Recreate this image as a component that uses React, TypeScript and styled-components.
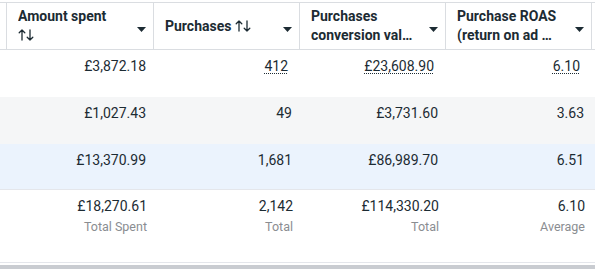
import React from "react";
import styled, { createGlobalStyle } from "styled-components";

const GlobalStyle = createGlobalStyle`
    html, body {
        margin: 0;
        padding: 0;
        background: #fff;
    }
    body {
        font-family: Roboto, "Liberation Sans", Arial, sans-serif;
        color: #1c2b33;
        -webkit-font-smoothing: antialiased;
    }
`;

/* 列幅は全行で共通 (先頭の列は画面外にはみ出している) */
const COLS = "147px 147px 146px 146px 146px 1fr";

const Page = styled.div`
    width: 595px;
    height: 270px;
    overflow: hidden;
    display: flex;
    flex-direction: column;
    padding-top: 2px;
    box-sizing: border-box;
`;

const Table = styled.div`
    margin-left: -141px;
    width: 736px;
    display: flex;
    flex-direction: column;
`;

const HeaderRow = styled.div`
    display: grid;
    grid-template-columns: ${COLS};
    height: 48px;
    border-top: 1px solid #dadde1;
    border-bottom: 1px solid #dadde1;
    box-sizing: border-box;
`;

const HeaderCell = styled.div`
    display: flex;
    align-items: center;
    gap: 8px;
    padding: 0 7px 0 11px;
    border-left: 1px solid #dadde1;
    min-width: 0;
`;

const Title = styled.div`
    flex: 1 1 auto;
    min-width: 0;
    font-size: 14px;
    font-weight: 700;
    line-height: 19px;
    color: #1c2b33;
`;

// 2行目は列幅に収まらない分を「…」で切る
const TitleLine = styled.div<{ $clip?: number }>`
    white-space: nowrap;
    overflow: hidden;
    text-overflow: ellipsis;
    max-width: ${(p) => (p.$clip ? `${p.$clip}px` : "none")};

    svg {
        vertical-align: -1px;
    }
`;

const Caret = styled.svg`
    flex: none;
    margin-left: auto;
    margin-top: 6px;
`;

const Row = styled.div<{ $bg: string; $h: number }>`
    display: grid;
    grid-template-columns: ${COLS};
    height: ${(p) => p.$h}px;
    background: ${(p) => p.$bg};
`;

const Cell = styled.div`
    padding: 6px 7px 0 8px;
    text-align: right;
    font-size: 14px;
    line-height: 20px;
    color: #1c2b33;
`;

const Value = styled.span<{ $linked?: boolean }>`
    margin-right: ${(p) => (p.$linked ? "4px" : "0")};
    text-decoration: ${(p) => (p.$linked ? "underline dotted" : "none")};
    text-underline-offset: 2px;
    text-decoration-thickness: 1px;
`;

const FooterRow = styled.div`
    display: grid;
    grid-template-columns: ${COLS};
    height: 74px;
    border-top: 1px solid #e4e6eb;
    border-bottom: 1px solid #e4e6eb;
    box-sizing: border-box;
`;

const FooterCell = styled.div`
    padding: 6px 6px 0 8px;
    text-align: right;
    display: flex;
    flex-direction: column;
`;

const Total = styled.div`
    font-size: 14px;
    line-height: 20px;
    color: #1c2b33;
`;

const SubLabel = styled.div`
    font-size: 12.5px;
    line-height: 21px;
    color: #8a8d91;
`;

const ScrollTrack = styled.div`
    margin-top: 2px;
    height: 4px;
    background: #c9ccd1;
`;

const SortIcon = () => (
    <svg width="16" height="12" viewBox="0 0 16 12" fill="none" stroke="#1c2b33" strokeWidth="1.3" strokeLinecap="round" strokeLinejoin="round">
        <path d="M4 11V1M1.2 3.8L4 1l2.8 2.8" />
        <path d="M12 1v10M9.2 8.2L12 11l2.8-2.8" />
    </svg>
);

const CaretIcon = () => (
    <Caret width="9" height="5" viewBox="0 0 9 5">
        <path d="M0 0h9L4.5 5z" fill="#1c2b33" />
    </Caret>
);

type Col = { lines: React.ReactNode[]; clip?: number };

const columns: Col[] = [
    { lines: ["Amount spent", <SortIcon key="s" />] },
    { lines: [<>Purchases <SortIcon key="s" /></>] },
    { lines: ["Purchases", "conversion value"], clip: 104 },
    { lines: ["Purchase ROAS", "(return on ad spend)"], clip: 98 },
];

type Datum = { v: string; linked?: boolean };

const rows: { bg: string; h: number; cells: Datum[] }[] = [
    {
        bg: "#ffffff",
        h: 47,
        cells: [{ v: "£3,872.18" }, { v: "412", linked: true }, { v: "£23,608.90", linked: true }, { v: "6.10", linked: true }],
    },
    {
        bg: "#f5f6f7",
        h: 47,
        cells: [{ v: "£1,027.43" }, { v: "49" }, { v: "£3,731.60" }, { v: "3.63" }],
    },
    {
        bg: "#ebf3fd",
        h: 45,
        cells: [{ v: "£13,370.99" }, { v: "1,681" }, { v: "£86,989.70" }, { v: "6.51" }],
    },
];

const totals = [
    { v: "—", label: "Results" },
    { v: "£18,270.61", label: "Total Spent" },
    { v: "2,142", label: "Total" },
    { v: "£114,330.20", label: "Total" },
    { v: "6.10", label: "Average" },
];

const App = () => {
    return (
        <Page>
            <GlobalStyle />
            <Table>
                <HeaderRow>
                    <HeaderCell />
                    {columns.map((c, i) => (
                        <HeaderCell key={i}>
                            <Title>
                                {c.lines.map((l, j) => (
                                    <TitleLine key={j} $clip={j > 0 ? c.clip : undefined}>
                                        {l}
                                    </TitleLine>
                                ))}
                            </Title>
                            <CaretIcon />
                        </HeaderCell>
                    ))}
                    <HeaderCell />
                </HeaderRow>

                {rows.map((r, i) => (
                    <Row key={i} $bg={r.bg} $h={r.h}>
                        <Cell />
                        {r.cells.map((d, j) => (
                            <Cell key={j}>
                                <Value $linked={d.linked}>{d.v}</Value>
                            </Cell>
                        ))}
                        <Cell />
                    </Row>
                ))}

                <FooterRow>
                    {totals.map((t, i) => (
                        <FooterCell key={i}>
                            <Total>{t.v}</Total>
                            <SubLabel>{t.label}</SubLabel>
                        </FooterCell>
                    ))}
                    <FooterCell />
                </FooterRow>
            </Table>
            <ScrollTrack />
        </Page>
    );
};

export default App;
